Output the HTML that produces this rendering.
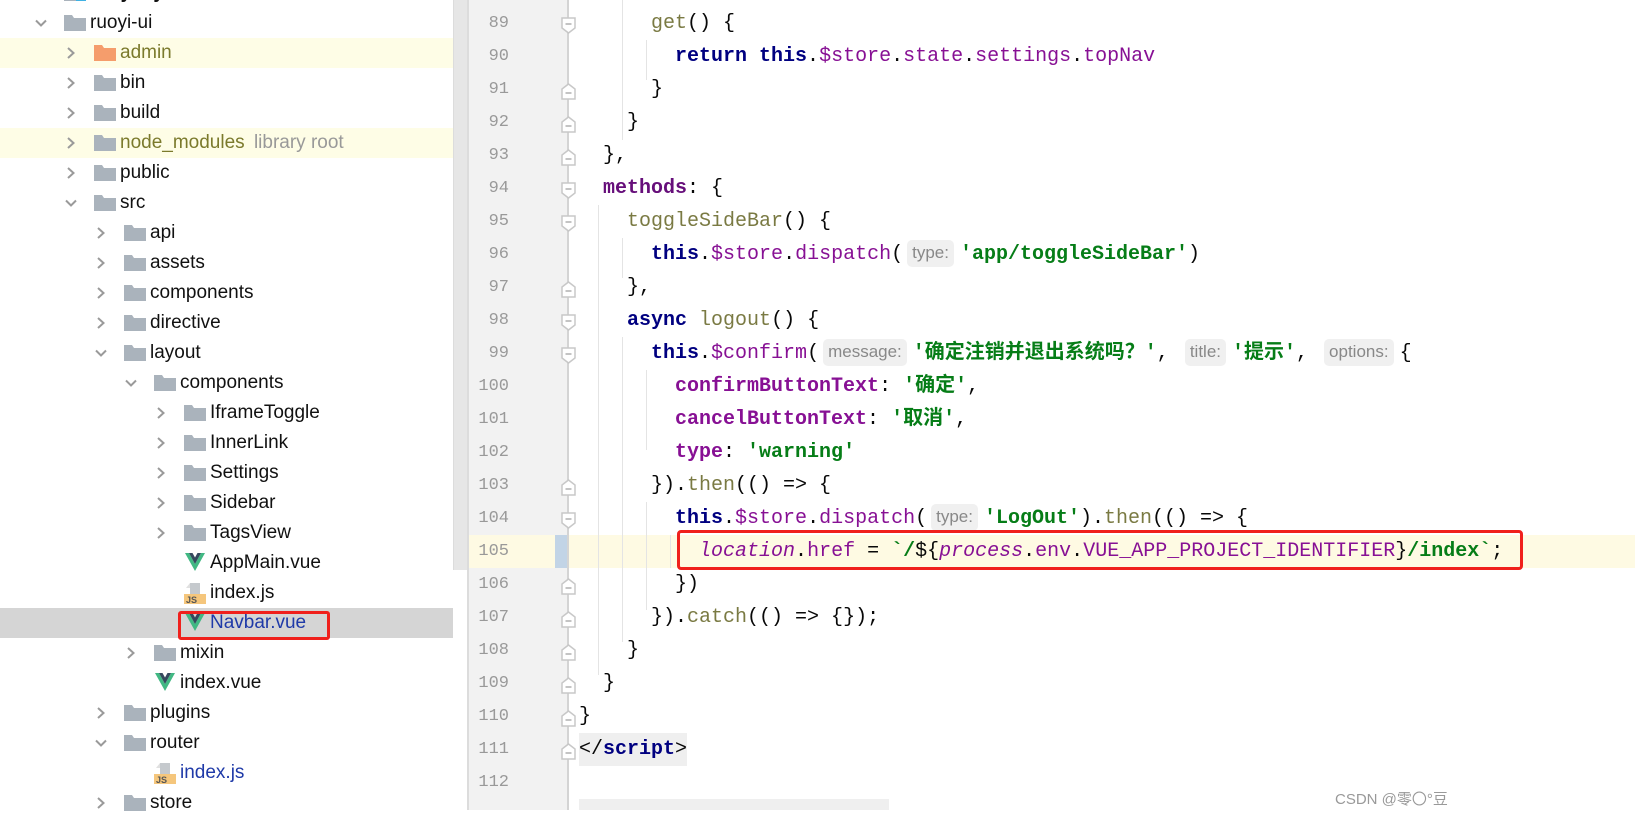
<!DOCTYPE html>
<html><head><meta charset="utf-8">
<style>
*{margin:0;padding:0;box-sizing:border-box}
body{width:1635px;height:810px;overflow:hidden;background:#fff;position:relative;font-family:"Liberation Sans","Noto Sans CJK SC",sans-serif}
.row{position:absolute;left:0;width:453px;height:30px}
.row .t{position:absolute;top:3px;font-size:19px;line-height:24px;color:#111;white-space:nowrap}
.chev{position:absolute;top:9px;width:12px;height:12px}
.fold{position:absolute;top:7px;width:22px;height:16px}
.gut{position:absolute;left:469px;top:0;width:99px;height:810px;background:#f2f2f2}
.ln{position:absolute;left:469px;width:40px;text-align:right;font-family:"Liberation Mono",monospace;font-size:17px;color:#999;line-height:33px;height:33px}
.cl{position:absolute;left:579px;font-family:"Liberation Mono","Noto Sans CJK SC",monospace;font-size:20px;line-height:33px;height:33px;white-space:pre;color:#080808}
.k{font-weight:bold;color:#000080}
.p{color:#871094}
.f{color:#7a7a43}
.s{color:#067d17;font-weight:bold}
.b{font-weight:bold}
.h{display:inline-block;font-family:"Liberation Sans",sans-serif;font-size:17px;color:#888;background:#f0f0f0;border-radius:5px;padding:0 5px;line-height:26px;height:27px;vertical-align:1px;margin:0 6px 0 4px;font-weight:normal}
.ig{position:absolute;width:1px;background:#e4e4e4}
.fm{position:absolute;left:561px;width:15px;height:17px}
</style></head><body>

<div style="position:absolute;left:0;top:38px;width:453px;height:30px;background:#fefde6"></div>
<div style="position:absolute;left:0;top:128px;width:453px;height:30px;background:#fefde6"></div>
<div style="position:absolute;left:0;top:608px;width:453px;height:30px;background:#d5d5d5"></div>
<div style="position:absolute;left:453px;top:0;width:15px;height:570px;background:#e6e6e6;border-left:1px solid #dcdcdc"></div>
<div style="position:absolute;left:467px;top:0;width:2px;height:810px;background:#dcdcdc"></div>

<svg width="0" height="0" style="position:absolute">
<defs>
<symbol id="cr" viewBox="0 0 12 12"><path d="M3 1 L8.5 6 L3 11" fill="none" stroke="#9a9a9a" stroke-width="2"/></symbol>
<symbol id="cd" viewBox="0 0 12 12"><path d="M1 3.5 L6 8.5 L11 3.5" fill="none" stroke="#9a9a9a" stroke-width="2"/></symbol>
<symbol id="fo" viewBox="0 0 22 16"><path d="M0 0 H8 L10 3 H22 V16 H0 Z" fill="#aab3bc"/></symbol>
<symbol id="fa" viewBox="0 0 22 16"><path d="M0 0 H8 L10 3 H22 V16 H0 Z" fill="#f59d6c"/></symbol>
<symbol id="vu" viewBox="0 0 20 20"><path d="M0 1 H4 L10 12 L16 1 H20 L10 19 Z" fill="#41b883"/><path d="M4 1 H7.5 L10 5.5 L12.5 1 H16 L10 12 Z" fill="#35495e"/></symbol>
<symbol id="js" viewBox="0 0 22 22"><path d="M6 0 H16 V12 H6 Z" fill="#c5c9cd"/><path d="M6 0 L2 5 H6Z" fill="#e0e0e0"/><rect x="0" y="11" width="22" height="10" fill="#f5c67c"/><text x="2" y="20" font-size="9" font-family="Liberation Sans" font-weight="bold" fill="#555">JS</text></symbol>
<symbol id="fd" viewBox="0 0 15 17"><path d="M1 1 H14 V11 L7.5 16 L1 11 Z" fill="#fff" stroke="#c8c8c8" stroke-width="1.5"/><path d="M4.5 7 H10.5" stroke="#b0b0b0" stroke-width="1.5"/></symbol>
<symbol id="fu" viewBox="0 0 15 17"><path d="M1 16 H14 V6 L7.5 1 L1 6 Z" fill="#fff" stroke="#c8c8c8" stroke-width="1.5"/><path d="M4.5 10 H10.5" stroke="#b0b0b0" stroke-width="1.5"/></symbol>
</defs></svg>

<div class="row" style="top:-22px"><svg class="fold" style="left:64px"><use href="#fo"/></svg><div style="position:absolute;left:76px;top:7px;width:10px;height:16px;background:#3fb1e3"></div><span class="t b" style="left:90px">ruoyi-system</span></div>
<div class="row" style="top:8px"><svg class="chev" style="left:35px"><use href="#cd"/></svg><svg class="fold" style="left:64px"><use href="#fo"/></svg><span class="t" style="left:90px">ruoyi-ui</span></div>
<div class="row" style="top:38px"><svg class="chev" style="left:65px"><use href="#cr"/></svg><svg class="fold" style="left:94px"><use href="#fa"/></svg><span class="t" style="left:120px;color:#7b7a2c">admin</span></div>
<div class="row" style="top:68px"><svg class="chev" style="left:65px"><use href="#cr"/></svg><svg class="fold" style="left:94px"><use href="#fo"/></svg><span class="t" style="left:120px">bin</span></div>
<div class="row" style="top:98px"><svg class="chev" style="left:65px"><use href="#cr"/></svg><svg class="fold" style="left:94px"><use href="#fo"/></svg><span class="t" style="left:120px">build</span></div>
<div class="row" style="top:128px"><svg class="chev" style="left:65px"><use href="#cr"/></svg><svg class="fold" style="left:94px"><use href="#fo"/></svg><span class="t" style="left:120px;color:#7b7a2c">node_modules <span style="color:#999;margin-left:4px">library root</span></span></div>
<div class="row" style="top:158px"><svg class="chev" style="left:65px"><use href="#cr"/></svg><svg class="fold" style="left:94px"><use href="#fo"/></svg><span class="t" style="left:120px">public</span></div>
<div class="row" style="top:188px"><svg class="chev" style="left:65px"><use href="#cd"/></svg><svg class="fold" style="left:94px"><use href="#fo"/></svg><span class="t" style="left:120px">src</span></div>
<div class="row" style="top:218px"><svg class="chev" style="left:95px"><use href="#cr"/></svg><svg class="fold" style="left:124px"><use href="#fo"/></svg><span class="t" style="left:150px">api</span></div>
<div class="row" style="top:248px"><svg class="chev" style="left:95px"><use href="#cr"/></svg><svg class="fold" style="left:124px"><use href="#fo"/></svg><span class="t" style="left:150px">assets</span></div>
<div class="row" style="top:278px"><svg class="chev" style="left:95px"><use href="#cr"/></svg><svg class="fold" style="left:124px"><use href="#fo"/></svg><span class="t" style="left:150px">components</span></div>
<div class="row" style="top:308px"><svg class="chev" style="left:95px"><use href="#cr"/></svg><svg class="fold" style="left:124px"><use href="#fo"/></svg><span class="t" style="left:150px">directive</span></div>
<div class="row" style="top:338px"><svg class="chev" style="left:95px"><use href="#cd"/></svg><svg class="fold" style="left:124px"><use href="#fo"/></svg><span class="t" style="left:150px">layout</span></div>
<div class="row" style="top:368px"><svg class="chev" style="left:125px"><use href="#cd"/></svg><svg class="fold" style="left:154px"><use href="#fo"/></svg><span class="t" style="left:180px">components</span></div>
<div class="row" style="top:398px"><svg class="chev" style="left:155px"><use href="#cr"/></svg><svg class="fold" style="left:184px"><use href="#fo"/></svg><span class="t" style="left:210px">IframeToggle</span></div>
<div class="row" style="top:428px"><svg class="chev" style="left:155px"><use href="#cr"/></svg><svg class="fold" style="left:184px"><use href="#fo"/></svg><span class="t" style="left:210px">InnerLink</span></div>
<div class="row" style="top:458px"><svg class="chev" style="left:155px"><use href="#cr"/></svg><svg class="fold" style="left:184px"><use href="#fo"/></svg><span class="t" style="left:210px">Settings</span></div>
<div class="row" style="top:488px"><svg class="chev" style="left:155px"><use href="#cr"/></svg><svg class="fold" style="left:184px"><use href="#fo"/></svg><span class="t" style="left:210px">Sidebar</span></div>
<div class="row" style="top:518px"><svg class="chev" style="left:155px"><use href="#cr"/></svg><svg class="fold" style="left:184px"><use href="#fo"/></svg><span class="t" style="left:210px">TagsView</span></div>
<div class="row" style="top:548px"><svg style="position:absolute;left:185px;top:4px;width:20px;height:20px"><use href="#vu"/></svg><span class="t" style="left:210px">AppMain.vue</span></div>
<div class="row" style="top:578px"><svg style="position:absolute;left:184px;top:5px;width:22px;height:22px"><use href="#js"/></svg><span class="t" style="left:210px">index.js</span></div>
<div class="row" style="top:608px"><svg style="position:absolute;left:185px;top:4px;width:20px;height:20px"><use href="#vu"/></svg><span class="t" style="left:210px;color:#1f3aa8">Navbar.vue</span></div>
<div style="position:absolute;left:178px;top:611px;width:152px;height:29px;border:3px solid #f0201c;border-radius:3px"></div>
<div class="row" style="top:638px"><svg class="chev" style="left:125px"><use href="#cr"/></svg><svg class="fold" style="left:154px"><use href="#fo"/></svg><span class="t" style="left:180px">mixin</span></div>
<div class="row" style="top:668px"><svg style="position:absolute;left:155px;top:4px;width:20px;height:20px"><use href="#vu"/></svg><span class="t" style="left:180px">index.vue</span></div>
<div class="row" style="top:698px"><svg class="chev" style="left:95px"><use href="#cr"/></svg><svg class="fold" style="left:124px"><use href="#fo"/></svg><span class="t" style="left:150px">plugins</span></div>
<div class="row" style="top:728px"><svg class="chev" style="left:95px"><use href="#cd"/></svg><svg class="fold" style="left:124px"><use href="#fo"/></svg><span class="t" style="left:150px">router</span></div>
<div class="row" style="top:758px"><svg style="position:absolute;left:154px;top:5px;width:22px;height:22px"><use href="#js"/></svg><span class="t" style="left:180px;color:#1f3aa8">index.js</span></div>
<div class="row" style="top:788px"><svg class="chev" style="left:95px"><use href="#cr"/></svg><svg class="fold" style="left:124px"><use href="#fo"/></svg><span class="t" style="left:150px">store</span></div>

<div class="gut"></div>
<div style="position:absolute;left:469px;top:535px;width:1166px;height:33px;background:#fefae3"></div>
<div style="position:absolute;left:555px;top:535px;width:13px;height:33px;background:#c2d4e6"></div>
<div style="position:absolute;left:567px;top:0;width:2px;height:810px;background:#d4d4d4"></div>
<div style="position:absolute;left:579px;top:733px;width:108px;height:33px;background:#efefef"></div>
<div style="position:absolute;left:579px;top:799px;width:310px;height:11px;background:#efefef"></div>

<div class="ig" style="left:598px;top:205px;height:470px"></div>
<div class="ig" style="left:622px;top:0;height:140px"></div>
<div class="ig" style="left:622px;top:238px;height:40px"></div>
<div class="ig" style="left:622px;top:337px;height:305px"></div>
<div class="ig" style="left:646px;top:40px;height:40px"></div>
<div class="ig" style="left:646px;top:370px;height:80px"></div>
<div class="ig" style="left:646px;top:502px;height:108px"></div>
<div class="ig" style="left:670px;top:535px;height:33px"></div>

<svg class="fm" style="top:17px"><use href="#fd"/></svg>
<svg class="fm" style="top:83px"><use href="#fu"/></svg>
<svg class="fm" style="top:116px"><use href="#fu"/></svg>
<svg class="fm" style="top:149px"><use href="#fu"/></svg>
<svg class="fm" style="top:182px"><use href="#fd"/></svg>
<svg class="fm" style="top:215px"><use href="#fd"/></svg>
<svg class="fm" style="top:281px"><use href="#fu"/></svg>
<svg class="fm" style="top:314px"><use href="#fd"/></svg>
<svg class="fm" style="top:347px"><use href="#fd"/></svg>
<svg class="fm" style="top:479px"><use href="#fu"/></svg>
<svg class="fm" style="top:512px"><use href="#fd"/></svg>
<svg class="fm" style="top:578px"><use href="#fu"/></svg>
<svg class="fm" style="top:611px"><use href="#fu"/></svg>
<svg class="fm" style="top:644px"><use href="#fu"/></svg>
<svg class="fm" style="top:677px"><use href="#fu"/></svg>
<svg class="fm" style="top:710px"><use href="#fu"/></svg>
<svg class="fm" style="top:743px"><use href="#fu"/></svg>

<div class="ln" style="top:7px">89</div>
<div class="ln" style="top:40px">90</div>
<div class="ln" style="top:73px">91</div>
<div class="ln" style="top:106px">92</div>
<div class="ln" style="top:139px">93</div>
<div class="ln" style="top:172px">94</div>
<div class="ln" style="top:205px">95</div>
<div class="ln" style="top:238px">96</div>
<div class="ln" style="top:271px">97</div>
<div class="ln" style="top:304px">98</div>
<div class="ln" style="top:337px">99</div>
<div class="ln" style="top:370px">100</div>
<div class="ln" style="top:403px">101</div>
<div class="ln" style="top:436px">102</div>
<div class="ln" style="top:469px">103</div>
<div class="ln" style="top:502px">104</div>
<div class="ln" style="top:535px">105</div>
<div class="ln" style="top:568px">106</div>
<div class="ln" style="top:601px">107</div>
<div class="ln" style="top:634px">108</div>
<div class="ln" style="top:667px">109</div>
<div class="ln" style="top:700px">110</div>
<div class="ln" style="top:733px">111</div>
<div class="ln" style="top:766px">112</div>

<div class="cl" style="top:7px">      <span class="f">get</span>() {</div>
<div class="cl" style="top:40px">        <span class="k">return this</span>.<span class="p">$store</span>.<span class="p">state</span>.<span class="p">settings</span>.<span class="p">topNav</span></div>
<div class="cl" style="top:73px">      }</div>
<div class="cl" style="top:106px">    }</div>
<div class="cl" style="top:139px">  },</div>
<div class="cl" style="top:172px">  <span class="p b" style="color:#660e7a">methods</span>: {</div>
<div class="cl" style="top:205px">    <span class="f">toggleSideBar</span>() {</div>
<div class="cl" style="top:238px">      <span class="k">this</span>.<span class="p">$store</span>.<span class="p">dispatch</span>(<span class="h">type:</span><span class="s">'app/toggleSideBar'</span>)</div>
<div class="cl" style="top:271px">    },</div>
<div class="cl" style="top:304px">    <span class="k">async</span> <span class="f">logout</span>() {</div>
<div class="cl" style="top:337px">      <span class="k">this</span>.<span class="p">$confirm</span>(<span class="h">message:</span><span class="s">'确定注销并退出系统吗？'</span>, <span class="h">title:</span><span class="s">'提示'</span>, <span class="h">options:</span>{</div>
<div class="cl" style="top:370px">        <span class="p b">confirmButtonText</span>: <span class="s">'确定'</span>,</div>
<div class="cl" style="top:403px">        <span class="p b">cancelButtonText</span>: <span class="s">'取消'</span>,</div>
<div class="cl" style="top:436px">        <span class="p b">type</span>: <span class="s">'warning'</span></div>
<div class="cl" style="top:469px">      }).<span class="f">then</span>(() => {</div>
<div class="cl" style="top:502px">        <span class="k">this</span>.<span class="p">$store</span>.<span class="p">dispatch</span>(<span class="h">type:</span><span class="s">'LogOut'</span>).<span class="f">then</span>(() => {</div>
<div class="cl" style="top:535px">          <i class="p">location</i>.<span class="p">href</span> = <span class="s">`/</span>${<i class="p">process</i>.<span class="p">env</span>.<span class="p">VUE_APP_PROJECT_IDENTIFIER</span>}<span class="s">/index`</span>;</div>
<div class="cl" style="top:568px">        })</div>
<div class="cl" style="top:601px">      }).<span class="f">catch</span>(() => {});</div>
<div class="cl" style="top:634px">    }</div>
<div class="cl" style="top:667px">  }</div>
<div class="cl" style="top:700px">}</div>
<div class="cl" style="top:733px">&lt;/<span class="k">script</span>&gt;</div>

<div style="position:absolute;left:677px;top:530px;width:846px;height:40px;border:3px solid #f0201c;border-radius:4px"></div>

<div style="position:absolute;left:1335px;top:788px;font-size:15px;color:#999;font-family:'Liberation Sans','Noto Sans CJK SC',sans-serif">CSDN @零〇°豆</div>
</body></html>
